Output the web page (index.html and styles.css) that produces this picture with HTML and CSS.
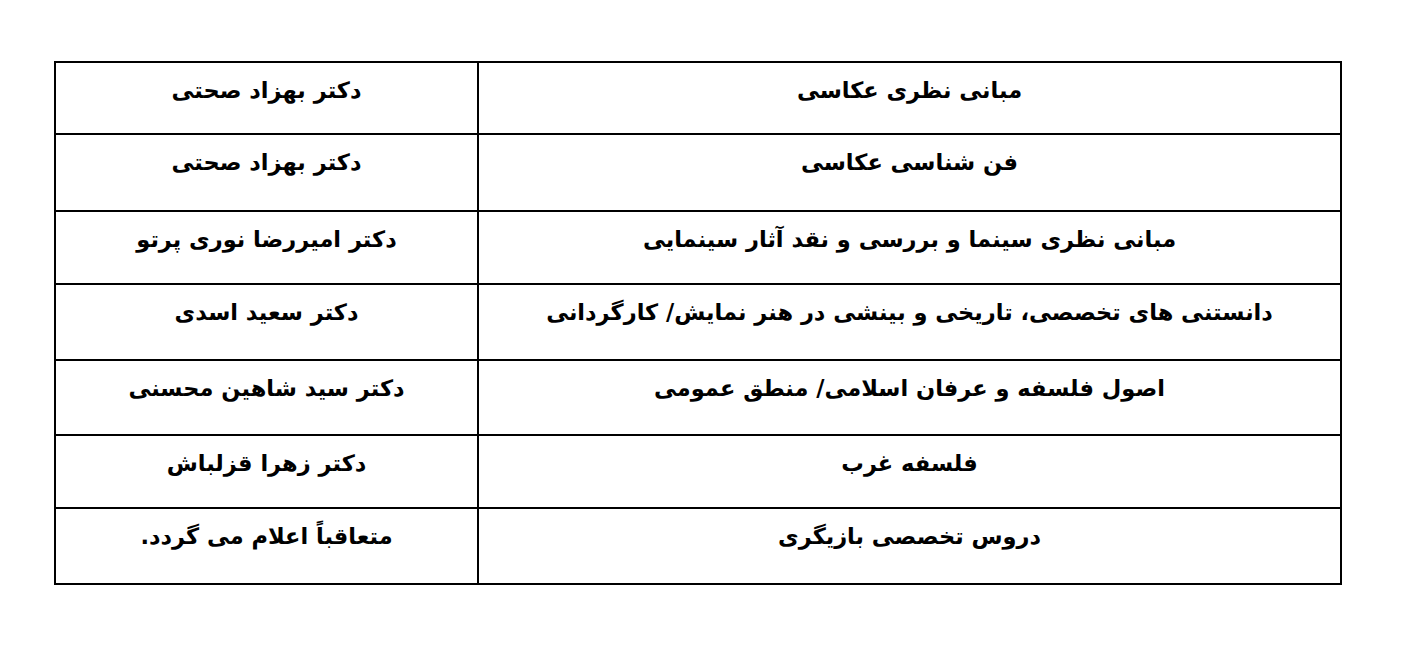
FILE: index.html
```html
<!DOCTYPE html>
<html lang="fa" dir="rtl">
<head>
<meta charset="utf-8">
<link rel="stylesheet" href="styles.css">
</head>
<body>
<table class="courses">
  <colgroup><col class="c-course"><col class="c-teacher"></colgroup>
  <tr class="r1"><td>مبانی نظری عکاسی</td><td>دکتر بهزاد صحتی</td></tr>
  <tr class="r2"><td>فن شناسی عکاسی</td><td>دکتر بهزاد صحتی</td></tr>
  <tr class="r3"><td>مبانی نظری سینما و بررسی و نقد آثار سینمایی</td><td>دکتر امیررضا نوری پرتو</td></tr>
  <tr class="r4"><td>دانستنی های تخصصی، تاریخی و بینشی در هنر نمایش/ کارگردانی</td><td>دکتر سعید اسدی</td></tr>
  <tr class="r5"><td>اصول فلسفه و عرفان اسلامی/ منطق عمومی</td><td>دکتر سید شاهین محسنی</td></tr>
  <tr class="r6"><td>فلسفه غرب</td><td>دکتر زهرا قزلباش</td></tr>
  <tr class="r7"><td>دروس تخصصی بازیگری</td><td>متعاقباً اعلام می گردد.</td></tr>
</table>
</body>
</html>
```
FILE: styles.css
```css
html, body {
  margin: 0;
  padding: 0;
  background: #fff;
}
body {
  padding: 61px 59px 0 0;
  font-family: "DejaVu Sans", sans-serif;
}
.courses {
  border-collapse: collapse;
  width: 1286px;
  table-layout: fixed;
}
.c-course { width: 863px; }
.c-teacher { width: 423px; }
.courses td {
  border: 2px solid #000;
  vertical-align: top;
  text-align: center;
  font-weight: bold;
  font-size: 22.5px;
  color: #000;
  padding: 12px 4px 0;
  line-height: 30px;
}
.r1 td { height: 58px; }
.r2 td { height: 63px; }
.r3 td { height: 59px; }
.r4 td { height: 62px; }
.r5 td { height: 61px; }
.r6 td { height: 59px; }
.r7 td { height: 62px; }
```
